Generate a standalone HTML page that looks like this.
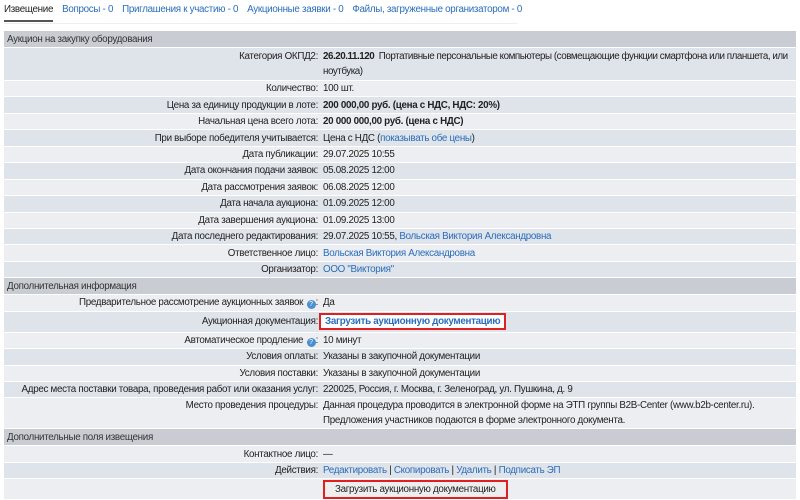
<!DOCTYPE html>
<html><head><meta charset="utf-8"><style>
body{margin:0;background:#fff;font-family:"Liberation Sans",Arial,sans-serif;font-size:9.8px;letter-spacing:-0.3px;color:#222;width:800px;height:500px;overflow:hidden}
a{color:#2a6ebb;text-decoration:none}
.tabs{position:absolute;left:4px;top:4px;height:18px;white-space:nowrap}
.tabs span{display:inline-block;margin-right:9px;color:#2a6ebb;padding-bottom:5px}
.tabs span.act{color:#222;border-bottom:2px solid #555}
.line{position:absolute;left:4px;top:23px;width:513px;height:1px;background:#eee}
.t{position:absolute;left:4px;top:31px;width:792px}
.r{display:flex;margin-bottom:1px;align-items:center;line-height:15px;white-space:nowrap;box-sizing:border-box;overflow:visible}
.h{background:#c9cdd3;height:16px;padding-left:3px;color:#333}
.d{background:#dfe3ea}.l{background:#eceef1}
.k{width:314px;text-align:right;padding-right:5px;flex:none}
.v{flex:1;white-space:normal}
b{font-weight:bold}
.q{display:inline-block;width:9px;height:9px;border-radius:50%;background:#4a8fd0;color:#fff;font-size:7px;line-height:9px;text-align:center;vertical-align:-1px;margin-left:1px;letter-spacing:0}
.box{border:2px solid #e02020;padding:1px 4px;font-weight:bold;background:#fff}
.btn{display:inline-block;border:2px solid #e02020;background:#eee;padding:1px 10px;color:#222;line-height:13px}
</style></head><body>
<div class="tabs"><span class="act">Извещение</span><span>Вопросы - 0</span><span>Приглашения к участию - 0</span><span>Аукционные заявки - 0</span><span>Файлы, загруженные организатором - 0</span></div>
<div class="line"></div>
<div class="t">
<div class="r h">Аукцион на закупку оборудования</div>
<div class="r d" style="height:32px;align-items:flex-start;padding-top:1px"><div class="k">Категория ОКПД2:</div><div class="v" style="white-space:nowrap;letter-spacing:-0.45px"><b>26.20.11.120</b>&nbsp; Портативные персональные компьютеры (совмещающие функции смартфона или планшета, или<br>ноутбука)</div></div>
<div class="r l" style="height:15.45px"><div class="k">Количество:</div><div class="v">100 шт.</div></div>
<div class="r d" style="height:15.45px"><div class="k">Цена за единицу продукции в лоте:</div><div class="v"><b>200 000,00 руб. (цена с НДС, НДС: 20%)</b></div></div>
<div class="r l" style="height:15.45px"><div class="k">Начальная цена всего лота:</div><div class="v"><b>20 000 000,00 руб. (цена с НДС)</b></div></div>
<div class="r d" style="height:15.45px"><div class="k">При выборе победителя учитывается:</div><div class="v">Цена с НДС (<a>показывать обе цены</a>)</div></div>
<div class="r l" style="height:15.45px"><div class="k">Дата публикации:</div><div class="v">29.07.2025 10:55</div></div>
<div class="r d" style="height:15.45px"><div class="k">Дата окончания подачи заявок:</div><div class="v">05.08.2025 12:00</div></div>
<div class="r l" style="height:15.45px"><div class="k">Дата рассмотрения заявок:</div><div class="v">06.08.2025 12:00</div></div>
<div class="r d" style="height:15.45px"><div class="k">Дата начала аукциона:</div><div class="v">01.09.2025 12:00</div></div>
<div class="r l" style="height:15.45px"><div class="k">Дата завершения аукциона:</div><div class="v">01.09.2025 13:00</div></div>
<div class="r d" style="height:15.45px"><div class="k">Дата последнего редактирования:</div><div class="v">29.07.2025 10:55, <a>Вольская Виктория Александровна</a></div></div>
<div class="r l" style="height:15.45px"><div class="k">Ответственное лицо:</div><div class="v"><a>Вольская Виктория Александровна</a></div></div>
<div class="r d" style="height:15.45px"><div class="k">Организатор:</div><div class="v"><a>ООО "Виктория"</a></div></div>
<div class="r h">Дополнительная информация</div>
<div class="r l" style="height:15.45px"><div class="k">Предварительное рассмотрение аукционных заявок <span class="q">?</span>:</div><div class="v">Да</div></div>
<div class="r d" style="height:20px"><div class="k" style="padding-right:1px">Аукционная документация:</div><div class="v"><a class="box">Загрузить аукционную документацию</a></div></div>
<div class="r l" style="height:15.45px"><div class="k">Автоматическое продление <span class="q">?</span>:</div><div class="v">10 минут</div></div>
<div class="r d" style="height:15.45px"><div class="k">Условия оплаты:</div><div class="v">Указаны в закупочной документации</div></div>
<div class="r l" style="height:15.45px"><div class="k">Условия поставки:</div><div class="v">Указаны в закупочной документации</div></div>
<div class="r d" style="height:15.45px"><div class="k">Адрес места поставки товара, проведения работ или оказания услуг:</div><div class="v">220025, Россия, г. Москва, г. Зеленоград, ул. Пушкина, д. 9</div></div>
<div class="r l" style="height:30px;align-items:flex-start"><div class="k">Место проведения процедуры:</div><div class="v">Данная процедура проводится в электронной форме на ЭТП группы B2B-Center (www.b2b-center.ru).<br>Предложения участников подаются в форме электронного документа.</div></div>
<div class="r h">Дополнительные поля извещения</div>
<div class="r l" style="height:15.45px"><div class="k">Контактное лицо:</div><div class="v">—</div></div>
<div class="r d" style="height:15.45px"><div class="k">Действия:</div><div class="v"><a>Редактировать</a> | <a>Скопировать</a> | <a>Удалить</a> | <a>Подписать ЭП</a></div></div>
<div class="r l" style="height:20px"><div class="k"></div><div class="v"><span class="btn">Загрузить аукционную документацию</span></div></div>
</div>
</body></html>
